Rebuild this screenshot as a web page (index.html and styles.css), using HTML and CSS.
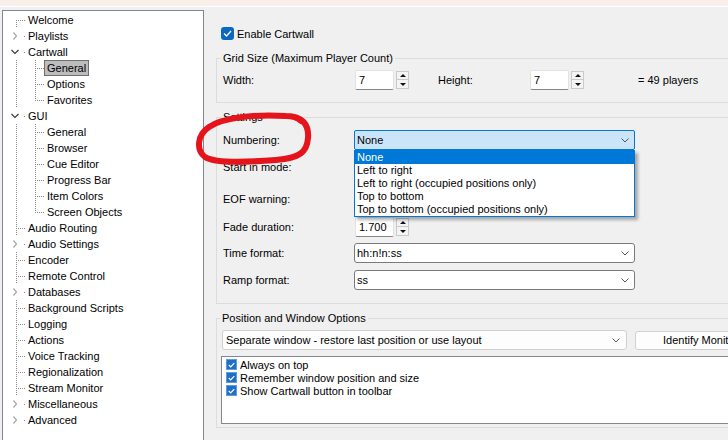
FILE: index.html
```html
<!DOCTYPE html>
<html lang="en">

<head>
    <meta charset="UTF-8">
    <meta name="viewport" content="width=device-width, initial-scale=1.0">
    <title>Options - Cartwall</title>
    <link rel="stylesheet" href="styles.css">
</head>

<body>
    <div class="titlebar"></div>
    <div class="window">
        <!-- options tree -->
        <div class="tree">
            <div class="row"><span class="g first"></span><span class="lbl">Welcome</span></div>
            <div class="row"><span class="g exp"><svg width="19" height="16"><path d="M7.5 4.5 L10.5 8 L7.5 11.5" fill="none" stroke="#a8a8a8" stroke-width="1.2"/></svg></span><span class="lbl">Playlists</span></div>
            <div class="row"><span class="g exp"><svg width="19" height="16"><path d="M5.5 6 L9 9.5 L12.5 6" fill="none" stroke="#3a3a3a" stroke-width="1.2"/></svg></span><span class="lbl">Cartwall</span></div>
            <div class="row"><span class="g pipe"></span><span class="g tee"></span><span class="lbl sel">General</span></div>
            <div class="row"><span class="g pipe"></span><span class="g tee"></span><span class="lbl">Options</span></div>
            <div class="row"><span class="g pipe"></span><span class="g elbow"></span><span class="lbl">Favorites</span></div>
            <div class="row"><span class="g exp"><svg width="19" height="16"><path d="M5.5 6 L9 9.5 L12.5 6" fill="none" stroke="#3a3a3a" stroke-width="1.2"/></svg></span><span class="lbl">GUI</span></div>
            <div class="row"><span class="g pipe"></span><span class="g tee"></span><span class="lbl">General</span></div>
            <div class="row"><span class="g pipe"></span><span class="g tee"></span><span class="lbl">Browser</span></div>
            <div class="row"><span class="g pipe"></span><span class="g tee"></span><span class="lbl">Cue Editor</span></div>
            <div class="row"><span class="g pipe"></span><span class="g tee"></span><span class="lbl">Progress Bar</span></div>
            <div class="row"><span class="g pipe"></span><span class="g tee"></span><span class="lbl">Item Colors</span></div>
            <div class="row"><span class="g pipe"></span><span class="g elbow"></span><span class="lbl">Screen Objects</span></div>
            <div class="row"><span class="g tee"></span><span class="lbl">Audio Routing</span></div>
            <div class="row"><span class="g exp"><svg width="19" height="16"><path d="M7.5 4.5 L10.5 8 L7.5 11.5" fill="none" stroke="#a8a8a8" stroke-width="1.2"/></svg></span><span class="lbl">Audio Settings</span></div>
            <div class="row"><span class="g tee"></span><span class="lbl">Encoder</span></div>
            <div class="row"><span class="g tee"></span><span class="lbl">Remote Control</span></div>
            <div class="row"><span class="g exp"><svg width="19" height="16"><path d="M7.5 4.5 L10.5 8 L7.5 11.5" fill="none" stroke="#a8a8a8" stroke-width="1.2"/></svg></span><span class="lbl">Databases</span></div>
            <div class="row"><span class="g tee"></span><span class="lbl">Background Scripts</span></div>
            <div class="row"><span class="g tee"></span><span class="lbl">Logging</span></div>
            <div class="row"><span class="g tee"></span><span class="lbl">Actions</span></div>
            <div class="row"><span class="g tee"></span><span class="lbl">Voice Tracking</span></div>
            <div class="row"><span class="g tee"></span><span class="lbl">Regionalization</span></div>
            <div class="row"><span class="g tee"></span><span class="lbl">Stream Monitor</span></div>
            <div class="row"><span class="g exp"><svg width="19" height="16"><path d="M7.5 4.5 L10.5 8 L7.5 11.5" fill="none" stroke="#a8a8a8" stroke-width="1.2"/></svg></span><span class="lbl">Miscellaneous</span></div>
            <div class="row"><span class="g exp"><svg width="19" height="16"><path d="M7.5 4.5 L10.5 8 L7.5 11.5" fill="none" stroke="#a8a8a8" stroke-width="1.2"/></svg></span><span class="lbl">Advanced</span></div>
        </div>

        <!-- cartwall general page -->
        <div class="pane">
            <div class="enable">
                <span class="check-lg"><svg width="9" height="7" viewBox="0 0 9 7"><path d="M1 3.5 L3.5 6 L8 1" fill="none" stroke="#fff" stroke-width="1.3"/></svg></span>
                <span>Enable Cartwall</span>
            </div>

            <fieldset class="group grid-group">
                <legend>Grid Size (Maximum Player Count)</legend>
                <div class="field">
                    <span class="label w-label">Width:</span>
                    <div class="spin">
                        <div class="spin-input">7</div>
                        <div class="spin-btns">
                            <span class="spin-btn"><i class="tri-up"></i></span>
                            <span class="spin-btn"><i class="tri-down"></i></span>
                        </div>
                    </div>
                    <span class="label h-label">Height:</span>
                    <div class="spin">
                        <div class="spin-input">7</div>
                        <div class="spin-btns">
                            <span class="spin-btn"><i class="tri-up"></i></span>
                            <span class="spin-btn"><i class="tri-down"></i></span>
                        </div>
                    </div>
                    <span class="players">= 49 players</span>
                </div>
            </fieldset>

            <fieldset class="group settings-group">
                <legend>Settings</legend>
                <div class="field">
                    <span class="label s-label">Numbering:</span>
                    <div class="combo-wrap">
                        <div class="combo open">
                            <span>None</span>
                            <svg width="8" height="5" viewBox="0 0 8 5"><path d="M0.5 0.5 L4 4 L7.5 0.5" fill="none" stroke="#555"/></svg>
                        </div>
                        <ul class="dropdown">
                            <li class="hl">None</li>
                            <li>Left to right</li>
                            <li>Left to right (occupied positions only)</li>
                            <li>Top to bottom</li>
                            <li>Top to bottom (occupied positions only)</li>
                        </ul>
                    </div>
                </div>
                <div class="field">
                    <span class="label s-label">Start in mode:</span>
                    <div class="combo"></div>
                </div>
                <div class="field gap-wide">
                    <span class="label s-label">EOF warning:</span>
                    <div class="spin spin-s">
                        <div class="spin-input"></div>
                    </div>
                </div>
                <div class="field gap-mid">
                    <span class="label s-label">Fade duration:</span>
                    <div class="spin spin-s">
                        <div class="spin-input">1.700</div>
                        <div class="spin-btns">
                            <span class="spin-btn"><i class="tri-up"></i></span>
                            <span class="spin-btn"><i class="tri-down"></i></span>
                        </div>
                    </div>
                </div>
                <div class="field gap-tight">
                    <span class="label s-label">Time format:</span>
                    <div class="combo">
                        <span>hh:n!n:ss</span>
                        <svg width="8" height="5" viewBox="0 0 8 5"><path d="M0.5 0.5 L4 4 L7.5 0.5" fill="none" stroke="#555"/></svg>
                    </div>
                </div>
                <div class="field">
                    <span class="label s-label">Ramp format:</span>
                    <div class="combo">
                        <span>ss</span>
                        <svg width="8" height="5" viewBox="0 0 8 5"><path d="M0.5 0.5 L4 4 L7.5 0.5" fill="none" stroke="#555"/></svg>
                    </div>
                </div>
            </fieldset>

            <fieldset class="group pos-group">
                <legend>Position and Window Options</legend>
                <div class="pos-row">
                    <div class="combo combo-light">
                        <span>Separate window - restore last position or use layout</span>
                        <svg width="8" height="5" viewBox="0 0 8 5"><path d="M0.5 0.5 L4 4 L7.5 0.5" fill="none" stroke="#555"/></svg>
                    </div>
                    <div class="btn">Identify Monitor</div>
                </div>
                <div class="checklist">
                    <div class="check-item"><span class="check-sm"><svg width="7" height="6" viewBox="0 0 9 7"><path d="M1 3.5 L3.5 6 L8 1" fill="none" stroke="#fff" stroke-width="1.6"/></svg></span>Always on top</div>
                    <div class="check-item"><span class="check-sm"><svg width="7" height="6" viewBox="0 0 9 7"><path d="M1 3.5 L3.5 6 L8 1" fill="none" stroke="#fff" stroke-width="1.6"/></svg></span>Remember window position and size</div>
                    <div class="check-item"><span class="check-sm"><svg width="7" height="6" viewBox="0 0 9 7"><path d="M1 3.5 L3.5 6 L8 1" fill="none" stroke="#fff" stroke-width="1.6"/></svg></span>Show Cartwall button in toolbar</div>
                </div>
            </fieldset>
        </div>
    </div>

    <!-- red marker annotation -->
    <svg class="scribble" width="728" height="440" viewBox="0 0 728 440">
        <path d="M286 116 C303 116, 309 125, 308 138 C307 152, 300 158, 276 160 C250 162, 216 164, 205 157 C196 150, 197 135, 209 127 C222 118, 252 114, 286 116 C293 116, 298 118, 301 121" fill="none" stroke="#e5141b" stroke-width="6" stroke-linecap="round" stroke-linejoin="round"/>
    </svg>
</body>

</html>
```

FILE: styles.css
```css
* {
    box-sizing: border-box;
}

html,
body {
    margin: 0;
    padding: 0;
}

body {
    --dot-v: repeating-linear-gradient(to bottom, #8a8a8a 0 1px, transparent 1px 2px);
    --dot-h: repeating-linear-gradient(to right, #8a8a8a 0 1px, transparent 1px 2px);
    position: relative;
    width: 728px;
    height: 440px;
    overflow: hidden;
    font-family: "Liberation Sans", Arial, sans-serif;
    font-size: 11px;
    color: #000;
    background-color: #f0f0f0;
}

.titlebar {
    height: 7px;
    background-color: #f8efea;
    border-bottom: 1px solid #fff;
}

.window {
    display: flex;
    align-items: flex-start;
}

/* tree */

.tree {
    flex: none;
    width: 202px;
    height: 440px;
    margin: 3px 0 0 2px;
    padding: 1px 0 0 3px;
    background: #fff;
    border: 1px solid #828790;
}

.row {
    display: flex;
    align-items: center;
    height: 16px;
    white-space: nowrap;
}

.g {
    flex: none;
    width: 19px;
    height: 16px;
    background-repeat: no-repeat;
}

.g svg {
    display: block;
}

.tee {
    background-image: var(--dot-v), var(--dot-h);
    background-size: 1px 16px, 8px 1px;
    background-position: 10px 0, 12px 8px;
}

.pipe {
    background-image: var(--dot-v);
    background-size: 1px 16px;
    background-position: 10px 0;
}

.elbow {
    background-image: var(--dot-v), var(--dot-h);
    background-size: 1px 9px, 8px 1px;
    background-position: 10px 0, 12px 8px;
}

.first {
    background-image: var(--dot-v), var(--dot-h);
    background-size: 1px 8px, 8px 1px;
    background-position: 10px 8px, 12px 8px;
}

.exp {
    background-image: linear-gradient(#8a8a8a, #8a8a8a);
    background-size: 1px 1px;
    background-position: 18px 8px;
}

.lbl {
    line-height: 14px;
    padding: 0 2px;
    border: 1px solid transparent;
}

.lbl.sel {
    background: #bdbdbd;
    border-color: #6f6f6f;
}

/* right page */

.pane {
    flex: 1;
    padding: 20px 0 0 12px;
}

.enable {
    display: flex;
    align-items: center;
    height: 13px;
    margin-left: 5px;
}

.check-lg {
    display: flex;
    align-items: center;
    justify-content: center;
    width: 13px;
    height: 13px;
    margin-right: 3px;
    border-radius: 3px;
    background: #0a67c2;
}

.group {
    width: 600px;
    min-width: 0;
    margin: 8px 0 0 0;
    border: 1px solid #dcdcdc;
}

.group legend {
    padding: 0 2px;
    margin-left: -2px;
    line-height: 13px;
}

.grid-group {
    margin-top: 12px;
    padding: 5px 6px 12px 6px;
}

.settings-group {
    padding: 6px 6px 13px 6px;
}

.pos-group {
    padding: 5px 5px 3px 5px;
}

.field {
    display: flex;
    align-items: center;
    height: 20px;
}

.field + .field {
    margin-top: 7px;
}

.field.gap-wide {
    margin-top: 12px;
}

.field.gap-mid {
    margin-top: 8px;
}

.field.gap-tight {
    margin-top: 6px;
}

.label {
    flex: none;
}

.w-label {
    width: 132px;
}

.h-label {
    width: 92px;
    margin-left: 29px;
}

.s-label {
    width: 131px;
}

.players {
    margin-left: 54px;
}

/* spin edit */

.spin {
    display: flex;
    align-items: center;
}

.spin-s {
    margin-left: 1px;
}

.spin-input {
    width: 39px;
    height: 20px;
    padding: 3px 0 0 3px;
    background: #fff;
    border: 1px solid #e2e2e2;
    border-bottom-color: #868686;
    border-radius: 2px;
}

.spin-btns {
    display: flex;
    flex-direction: column;
    margin-left: 2px;
}

.spin-btn {
    display: flex;
    align-items: center;
    justify-content: center;
    width: 13px;
    height: 9px;
    background: #f4f4f4;
    border: 1px solid #c9c9c9;
}

.spin-btn + .spin-btn {
    border-top: none;
}

.tri-up,
.tri-down {
    width: 0;
    height: 0;
    border-left: 3px solid transparent;
    border-right: 3px solid transparent;
}

.tri-up {
    border-bottom: 3px solid #111;
}

.tri-down {
    border-top: 3px solid #111;
}

/* combo box */

.combo-wrap {
    position: relative;
}

.combo {
    display: flex;
    align-items: center;
    justify-content: space-between;
    width: 281px;
    height: 20px;
    padding: 0 5px 0 2px;
    background: #fff;
    border: 1px solid #7a7a7a;
    border-radius: 3px;
}

.combo svg {
    flex: none;
}

.combo.open {
    background: #cce4f7;
    border-color: #0078d7;
    border-radius: 2px;
}

.dropdown {
    position: absolute;
    top: 20px;
    left: 0;
    z-index: 5;
    width: 281px;
    margin: 0;
    padding: 0;
    list-style: none;
    background: #fff;
    border: 1px solid #0078d7;
    box-shadow: 3px 3px 3px rgba(0, 0, 0, 0.3);
}

.dropdown li {
    height: 13px;
    line-height: 13px;
    padding-left: 2px;
    white-space: nowrap;
}

.dropdown li.hl {
    background: #0078d7;
    color: #fff;
}

.pos-row {
    display: flex;
    align-items: center;
}

.combo-light {
    width: 405px;
    padding: 0 6px 0 3px;
    background: #fdfdfd;
    border-color: #d0d0d0;
}

.btn {
    display: flex;
    align-items: center;
    flex: none;
    width: 142px;
    height: 19px;
    margin-left: 8px;
    padding-left: 27px;
    white-space: nowrap;
    background: #fdfdfd;
    border: 1px solid #d0d0d0;
    border-radius: 3px;
}

.checklist {
    width: 560px;
    height: 68px;
    margin: 6px 0 0 -1px;
    padding: 1px 0 0 4px;
    background: #fff;
    border: 1px solid #828790;
}

.check-item {
    display: flex;
    align-items: center;
    height: 13px;
    white-space: nowrap;
}

.check-sm {
    display: flex;
    align-items: center;
    justify-content: center;
    width: 11px;
    height: 11px;
    margin-right: 3px;
    background: #1f6fc5;
    border: 1px solid #5d9ddc;
}

.scribble {
    position: absolute;
    top: 0;
    left: 0;
    pointer-events: none;
}
```
